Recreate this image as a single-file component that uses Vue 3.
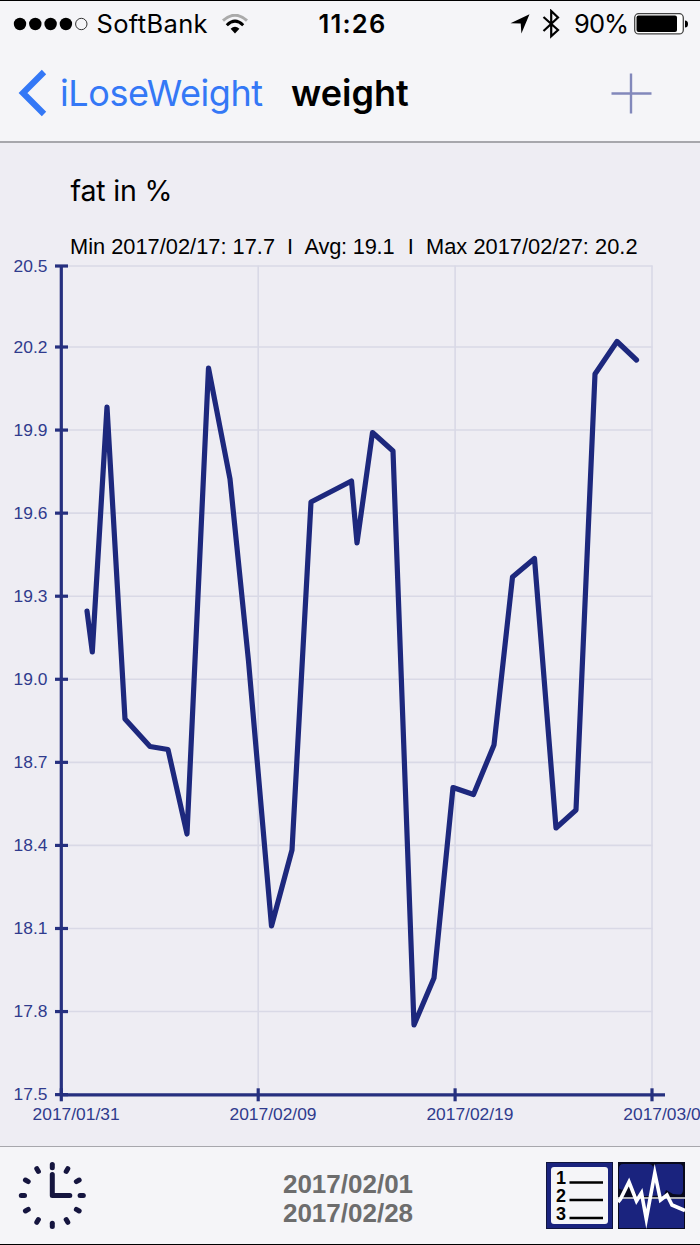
<script setup>
const yTicks = ['20.5', '20.2', '19.9', '19.6', '19.3', '19.0', '18.7', '18.4', '18.1', '17.8', '17.5'].map((label, i) => ({
  label,
  y: i === 0 ? 266 : 347 + (i - 1) * 83.07,
}))
const xTicks = ['2017/01/31', '2017/02/09', '2017/02/19', '2017/03/01'].map((label, i) => ({
  label,
  x: 61.3 + i * 196.9,
}))
const points = [
  [87, 611], [92.3, 652], [107, 407], [125, 719], [150, 746.5], [168, 749.5], [187, 834],
  [208.5, 368], [230, 479], [248.5, 661], [271.5, 926], [292, 850], [311, 502], [351.5, 481],
  [357, 543], [372.5, 432.5], [393, 451], [414, 1025], [434, 978], [453, 787.5], [473.5, 794.5],
  [494, 745], [512.5, 577], [534.5, 558.5], [556, 828], [576, 810], [595, 374], [617, 341.5], [636.5, 360],
]
const line = points.map((p) => p.join(',')).join(' ')
const clockTicks = Array.from({ length: 12 }, (_, i) => i * 30)
</script>

<template>
  <div class="screen">
    <header class="top">
      <div class="status">
        <div class="left">
          <svg class="dots" width="76" height="16" viewBox="0 0 76 16">
            <circle v-for="i in 4" :key="i" :cx="7 + (i - 1) * 15.3" cy="8" r="6.2" />
            <circle cx="68.3" cy="8" r="5.7" fill="none" stroke="#333" stroke-width="1" />
          </svg>
          <span class="carrier">SoftBank</span>
          <svg class="wifi" width="26" height="20" viewBox="0 0 26 20">
            <path d="M1 6.7Q13-4.2 25 6.7" stroke="#aaa" />
            <path d="M4.8 11.2Q13 3.2 21.2 11.2" stroke="#000" />
            <path class="wedge" d="M8.6 14.8Q13 10.6 17.4 14.8L13 19.4Z" />
          </svg>
        </div>
        <span class="time">11:26</span>
        <div class="right">
          <svg width="20" height="20" viewBox="0 0 20 20"><path d="M.5 9.2L19.5 .3L11.4 19.5L10.7 9.6Z" /></svg>
          <svg class="bt" width="18" height="30" viewBox="0 0 18 30">
            <path d="M1.5 8L16 21L9.2 27.2V2L16 8.5L1.5 22" fill="none" stroke="#000" stroke-width="2.2" />
          </svg>
          <span class="pct">90%</span>
          <svg class="battery" width="55" height="22" viewBox="0 0 55 22">
            <rect x=".7" y=".7" width="48.6" height="20.2" rx="4" fill="#fff" stroke="#444" stroke-width="1.3" />
            <rect x="2.5" y="2.5" width="40.5" height="16.6" rx="2" />
            <path d="M51 7.5Q54 7.5 54 11T51 14.5Z" />
          </svg>
        </div>
      </div>
      <nav class="nav">
        <svg class="back" width="30" height="48" viewBox="0 0 30 48">
          <path d="M27 3L6 24L27 45" fill="none" stroke="#3478f6" stroke-width="6.2" />
        </svg>
        <span class="back-label">iLoseWeight</span>
        <h1 class="title">weight</h1>
        <svg class="plus" width="41" height="41" viewBox="0 0 41 41">
          <path d="M.5 20.5H40.5M20 .5V40.5" stroke="#8288bb" stroke-width="2.4" />
        </svg>
      </nav>
    </header>

    <main class="chart">
      <svg width="700" height="1003" viewBox="0 143 700 1003">
        <text class="heading" x="70.5" y="201.3" textLength="102">fat in %</text>
        <g class="summary">
          <text x="70" y="254" textLength="205">Min 2017/02/17: 17.7</text>
          <text x="287" y="254">I</text>
          <text x="304.5" y="254" textLength="90">Avg: 19.1</text>
          <text x="407.8" y="254">I</text>
          <text x="426" y="254" textLength="211.5">Max 2017/02/27: 20.2</text>
        </g>
        <g class="grid">
          <path v-for="t in yTicks" :key="t.label" :d="`M61 ${t.y}H652.5`" />
          <path v-for="t in xTicks" :key="t.label" :d="`M${t.x} 265.5V1094`" />
        </g>
        <g class="axis">
          <path d="M61.3 266V1095M61.3 1094.8H665" />
          <path v-for="t in yTicks" :key="t.label" :d="`M55 ${t.y}H68`" />
          <path v-for="t in xTicks" :key="t.label" :d="`M${t.x} 1088.3V1101.3`" />
        </g>
        <g class="labels">
          <text v-for="t in yTicks" :key="t.label" x="13.5" :y="t.y + 5.7" textLength="34">{{ t.label }}</text>
          <text v-for="t in xTicks" :key="t.label" :x="t.x - 28.7" y="1120" textLength="87">{{ t.label }}</text>
        </g>
        <polyline class="series" :points="line" />
      </svg>
    </main>

    <footer class="bottom">
      <svg class="clock" width="68" height="68" viewBox="-34.3 -33.5 68 68">
        <g stroke="#15153f" stroke-width="5" stroke-linecap="round" fill="none">
          <path v-for="a in clockTicks" :key="a" d="M0 -31V-27.8" :transform="`rotate(${a})`" />
          <path d="M0 -21V0H17.5" stroke-linejoin="round" />
        </g>
      </svg>
      <div class="range">
        <span>2017/02/01</span>
        <span>2017/02/28</span>
      </div>
      <div class="modes">
        <svg width="67" height="67" viewBox="0 0 67 67">
          <rect x=".5" y=".5" width="66" height="66" fill="#1a237e" stroke="#10153f" />
          <rect x="5" y="5" width="57" height="57" rx="3" fill="#f5f5f8" />
          <g class="numbers">
            <text x="10" y="21.5">1</text>
            <text x="10" y="39.5">2</text>
            <text x="10" y="57.5">3</text>
          </g>
          <path d="M23.5 20.5H57M23.5 38H57M23.5 56H57" stroke="#000" stroke-width="2.5" />
        </svg>
        <svg width="67" height="67" viewBox="0 0 67 67">
          <rect width="67" height="67" fill="#08091c" />
          <path d="M5 2H31Q34 2 35 5Q36 2 40 2H61Q65 2 65 6V28Q65 33 60 33L1 35V7Q1 2 5 2Z" fill="#1a237e" />
          <path d="M1 37H66V66H1Z" fill="#1a237e" />
          <path d="M0 36V26L4 28L11 22L16 28L20 35ZM45 36L48 28L55 32L66 33V36Z" fill="#08091c" />
          <path d="M0 36H67" stroke="#e5e5e5" stroke-width="1.6" />
          <path d="M0 40L2.5 37L11 20L18.5 39L23.5 31L28.3 57L36.8 11L42.5 38L49 33L54 43L67 48.5" fill="none" stroke="#fff" stroke-width="3.6" stroke-miterlimit="8" />
        </svg>
      </div>
    </footer>
  </div>
</template>

<style>
body {
  margin: 0;
}
</style>

<style scoped>
.screen {
  box-sizing: border-box;
  width: 700px;
  height: 1245px;
  display: flex;
  flex-direction: column;
  overflow: hidden;
  background: #eeedf3;
  border-top: 1px solid #000;
  border-bottom: 1px solid #000;
  font-family: Inter, "Liberation Sans", sans-serif;
  color: #000;
}
svg {
  display: block;
  flex: none;
}
.top {
  box-sizing: border-box;
  height: 142px;
  flex: none;
  background: #f5f5f8;
  border-bottom: 2px solid #a7a7ac;
}
.status {
  height: 46px;
  display: grid;
  grid-template-columns: 1fr auto 1fr;
  align-items: center;
  padding: 0 11px 0 13px;
  font-size: 25.5px;
  line-height: 46px;
}
.left,
.right {
  display: flex;
  align-items: center;
}
.right {
  justify-content: flex-end;
}
.carrier {
  margin-left: 7.5px;
  width: 111px;
  letter-spacing: 0.35px;
}
.wifi {
  margin-left: 14px;
}
.wifi path {
  fill: none;
  stroke-width: 3;
}
.wifi .wedge {
  fill: #000;
}
.time {
  padding-left: 3px;
  font-weight: 600;
  letter-spacing: 1.2px;
}
.bt {
  margin-left: 12px;
}
.pct {
  margin-left: 14px;
  width: 54px;
  letter-spacing: -0.9px;
  white-space: nowrap;
}
.battery {
  margin-left: 6px;
}
.nav {
  height: 92px;
  display: flex;
  align-items: center;
  padding: 0 48px 0 17px;
}
.back-label {
  margin-left: 13px;
  width: 202px;
  color: #3478f6;
  font-size: 36px;
  letter-spacing: -0.42px;
}
.title {
  margin: 0 0 0 29px;
  font-size: 36px;
  font-weight: 600;
}
.plus {
  margin-left: auto;
}
.chart {
  height: 1003px;
  flex: none;
}
.heading {
  font-size: 28.5px;
}
.summary {
  font: 21.8px "Liberation Sans", sans-serif;
}
.grid path {
  stroke: #d9d9e6;
  stroke-width: 1.6;
}
.axis path {
  stroke: #26307f;
  stroke-width: 3.2;
}
.labels {
  font: 17.4px "Liberation Sans", sans-serif;
  fill: #303b8d;
}
.series {
  fill: none;
  stroke: #1d287d;
  stroke-width: 5.2;
  stroke-linecap: round;
  stroke-linejoin: round;
}
.bottom {
  box-sizing: border-box;
  height: 98px;
  flex: none;
  display: grid;
  grid-template-columns: 1fr auto 1fr;
  align-items: center;
  padding: 0 15px 0 18px;
  background: #f5f5f8;
  border-top: 1px solid #a7a7ac;
}
.range {
  display: flex;
  flex-direction: column;
  padding: 6px 7px 0 0;
  font: bold 26px/28.4px "Liberation Sans", sans-serif;
  color: #6d6d6d;
}
.modes {
  display: flex;
  justify-content: flex-end;
  gap: 5px;
}
.numbers {
  font: bold 18px "Liberation Sans", sans-serif;
}
</style>
